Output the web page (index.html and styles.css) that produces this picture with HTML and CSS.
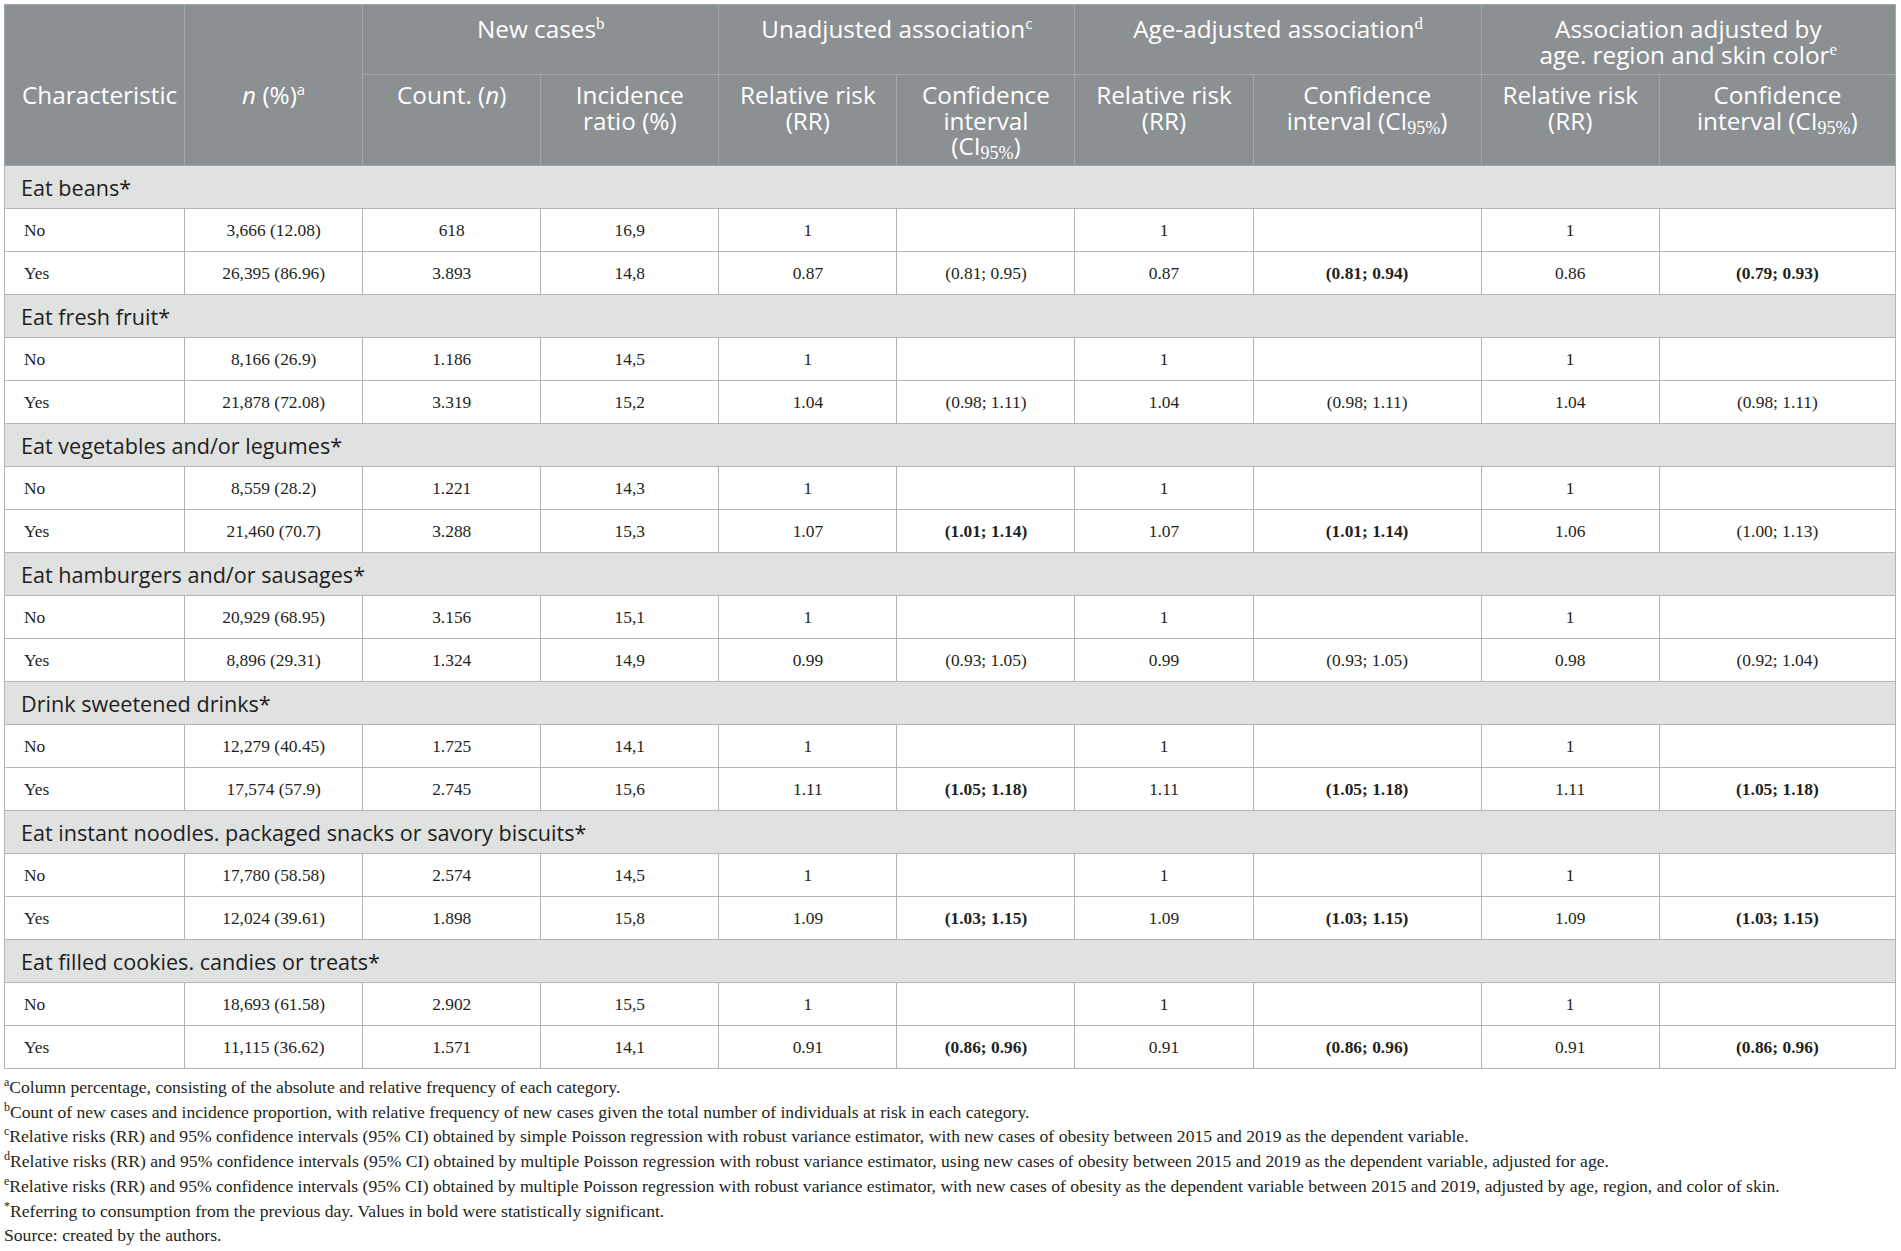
FILE: index.html
```html
<!DOCTYPE html>
<html lang="en">
<head>
<meta charset="utf-8">
<title>Table</title>
<link rel="stylesheet" href="styles.css">
</head>
<body>
<div class="page">
<table class="data-table">
  <colgroup>
    <col class="c-char"><col class="c-n"><col class="c-std"><col class="c-std"><col class="c-std"><col class="c-std"><col class="c-std"><col class="c-wide"><col class="c-std"><col class="c-last">
  </colgroup>
  <thead>
    <tr class="head-1">
      <th rowspan="2" class="span-cell char-cell">Characteristic</th>
      <th rowspan="2" class="span-cell"><i>n</i> (%)<sup>a</sup></th>
      <th colspan="2">New cases<sup class="serif-sup">b</sup></th>
      <th colspan="2">Unadjusted association<sup>c</sup></th>
      <th colspan="2">Age-adjusted association<sup class="serif-sup">d</sup></th>
      <th colspan="2">Association adjusted by<br>age. region and skin color<sup class="serif-sup">e</sup></th>
    </tr>
    <tr class="head-2">
      <th>Count. (<i>n</i>)</th>
      <th>Incidence<br>ratio (%)</th>
      <th>Relative risk<br>(RR)</th>
      <th>Confidence<br>interval<br>(CI<sub>95%</sub>)</th>
      <th>Relative risk<br>(RR)</th>
      <th>Confidence<br>interval (CI<sub>95%</sub>)</th>
      <th>Relative risk<br>(RR)</th>
      <th>Confidence<br>interval (CI<sub>95%</sub>)</th>
    </tr>
  </thead>
  <tbody>
    <tr class="section"><td colspan="10">Eat beans*</td></tr>
    <tr><td class="lab">No</td><td>3,666 (12.08)</td><td>618</td><td>16,9</td><td>1</td><td></td><td>1</td><td></td><td>1</td><td></td></tr>
    <tr><td class="lab">Yes</td><td>26,395 (86.96)</td><td>3.893</td><td>14,8</td><td>0.87</td><td>(0.81; 0.95)</td><td>0.87</td><td><b>(0.81; 0.94)</b></td><td>0.86</td><td><b>(0.79; 0.93)</b></td></tr>

    <tr class="section"><td colspan="10">Eat fresh fruit*</td></tr>
    <tr><td class="lab">No</td><td>8,166 (26.9)</td><td>1.186</td><td>14,5</td><td>1</td><td></td><td>1</td><td></td><td>1</td><td></td></tr>
    <tr><td class="lab">Yes</td><td>21,878 (72.08)</td><td>3.319</td><td>15,2</td><td>1.04</td><td>(0.98; 1.11)</td><td>1.04</td><td>(0.98; 1.11)</td><td>1.04</td><td>(0.98; 1.11)</td></tr>

    <tr class="section"><td colspan="10">Eat vegetables and/or legumes*</td></tr>
    <tr><td class="lab">No</td><td>8,559 (28.2)</td><td>1.221</td><td>14,3</td><td>1</td><td></td><td>1</td><td></td><td>1</td><td></td></tr>
    <tr><td class="lab">Yes</td><td>21,460 (70.7)</td><td>3.288</td><td>15,3</td><td>1.07</td><td><b>(1.01; 1.14)</b></td><td>1.07</td><td><b>(1.01; 1.14)</b></td><td>1.06</td><td>(1.00; 1.13)</td></tr>

    <tr class="section"><td colspan="10">Eat hamburgers and/or sausages*</td></tr>
    <tr><td class="lab">No</td><td>20,929 (68.95)</td><td>3.156</td><td>15,1</td><td>1</td><td></td><td>1</td><td></td><td>1</td><td></td></tr>
    <tr><td class="lab">Yes</td><td>8,896 (29.31)</td><td>1.324</td><td>14,9</td><td>0.99</td><td>(0.93; 1.05)</td><td>0.99</td><td>(0.93; 1.05)</td><td>0.98</td><td>(0.92; 1.04)</td></tr>

    <tr class="section"><td colspan="10">Drink sweetened drinks*</td></tr>
    <tr><td class="lab">No</td><td>12,279 (40.45)</td><td>1.725</td><td>14,1</td><td>1</td><td></td><td>1</td><td></td><td>1</td><td></td></tr>
    <tr><td class="lab">Yes</td><td>17,574 (57.9)</td><td>2.745</td><td>15,6</td><td>1.11</td><td><b>(1.05; 1.18)</b></td><td>1.11</td><td><b>(1.05; 1.18)</b></td><td>1.11</td><td><b>(1.05; 1.18)</b></td></tr>

    <tr class="section"><td colspan="10">Eat instant noodles. packaged snacks or savory biscuits*</td></tr>
    <tr><td class="lab">No</td><td>17,780 (58.58)</td><td>2.574</td><td>14,5</td><td>1</td><td></td><td>1</td><td></td><td>1</td><td></td></tr>
    <tr><td class="lab">Yes</td><td>12,024 (39.61)</td><td>1.898</td><td>15,8</td><td>1.09</td><td><b>(1.03; 1.15)</b></td><td>1.09</td><td><b>(1.03; 1.15)</b></td><td>1.09</td><td><b>(1.03; 1.15)</b></td></tr>

    <tr class="section"><td colspan="10">Eat filled cookies. candies or treats*</td></tr>
    <tr><td class="lab">No</td><td>18,693 (61.58)</td><td>2.902</td><td>15,5</td><td>1</td><td></td><td>1</td><td></td><td>1</td><td></td></tr>
    <tr><td class="lab">Yes</td><td>11,115 (36.62)</td><td>1.571</td><td>14,1</td><td>0.91</td><td><b>(0.86; 0.96)</b></td><td>0.91</td><td><b>(0.86; 0.96)</b></td><td>0.91</td><td><b>(0.86; 0.96)</b></td></tr>
  </tbody>
</table>
<div class="notes">
  <p><sup>a</sup>Column percentage, consisting of the absolute and relative frequency of each category.</p>
  <p><sup>b</sup>Count of new cases and incidence proportion, with relative frequency of new cases given the total number of individuals at risk in each category.</p>
  <p><sup>c</sup>Relative risks (RR) and 95% confidence intervals (95% CI) obtained by simple Poisson regression with robust variance estimator, with new cases of obesity between 2015 and 2019 as the dependent variable.</p>
  <p><sup>d</sup>Relative risks (RR) and 95% confidence intervals (95% CI) obtained by multiple Poisson regression with robust variance estimator, using new cases of obesity between 2015 and 2019 as the dependent variable, adjusted for age.</p>
  <p><sup>e</sup>Relative risks (RR) and 95% confidence intervals (95% CI) obtained by multiple Poisson regression with robust variance estimator, with new cases of obesity as the dependent variable between 2015 and 2019, adjusted by age, region, and color of skin.</p>
  <p><sup>*</sup>Referring to consumption from the previous day. Values in bold were statistically significant.</p>
  <p>Source: created by the authors.</p>
</div>
</div>
</body>
</html>
```
FILE: styles.css
```css
html, body {
  margin: 0;
  padding: 0;
  background: #ffffff;
}

.page {
  padding: 4px 0 0 4px;
}

.data-table {
  border-collapse: collapse;
  table-layout: fixed;
  width: 1892px;
  border: 1px solid #a9abab;
}

.c-char { width: 180px; }
.c-n { width: 178px; }
.c-std { width: 178px; }
.c-wide { width: 228px; }
.c-last { width: 236px; }

th {
  background: #8b9093;
  color: #ffffff;
  font-family: "Open Sans", "DejaVu Sans", sans-serif;
  font-weight: 400;
  font-size: 24.3px;
  line-height: 25.5px;
  text-align: center;
  border: 1px solid #a3a7a9;
  padding: 0 4px;
  white-space: nowrap;
}

.head-1 th {
  height: 70px;
  vertical-align: top;
  padding-top: 11px;
  box-sizing: border-box;
}

.head-1 th.span-cell {
  vertical-align: middle;
  padding-top: 20px;
}

.head-1 th.char-cell {
  text-align: left;
  padding-left: 17px;
  padding-right: 0;
}

.head-2 th {
  height: 91px;
  vertical-align: top;
  padding-top: 7px;
  box-sizing: border-box;
}

th sup {
  font-size: 15px;
  line-height: 0;
  vertical-align: 9px;
}

th sup.serif-sup {
  font-family: "Liberation Serif", serif;
  font-size: 17px;
}

th sub {
  font-family: "Liberation Serif", serif;
  font-size: 18px;
  line-height: 0;
  vertical-align: -4px;
}

td {
  font-family: "Liberation Serif", "Times New Roman", serif;
  font-size: 17.4px;
  color: #231f20;
  text-align: center;
  vertical-align: middle;
  height: 43px;
  padding: 0 6px;
  border: 1px solid #b3b5b5;
  box-sizing: border-box;
}

td.lab {
  text-align: left;
  padding-left: 19px;
}

td b {
  font-weight: 700;
}

.section td {
  background: #e0e2e1;
  font-family: "Open Sans", "DejaVu Sans", sans-serif;
  font-size: 21.6px;
  text-align: left;
  padding-left: 16px;
  color: #1e1e1e;
}

.notes {
  font-family: "Liberation Serif", "Times New Roman", serif;
  font-size: 17.6px;
  color: #231f20;
  margin-top: 6px;
}

.notes p {
  margin: 0;
  line-height: 24.7px;
}

.notes sup {
  font-size: 12px;
  line-height: 0;
  vertical-align: 7px;
}
```
